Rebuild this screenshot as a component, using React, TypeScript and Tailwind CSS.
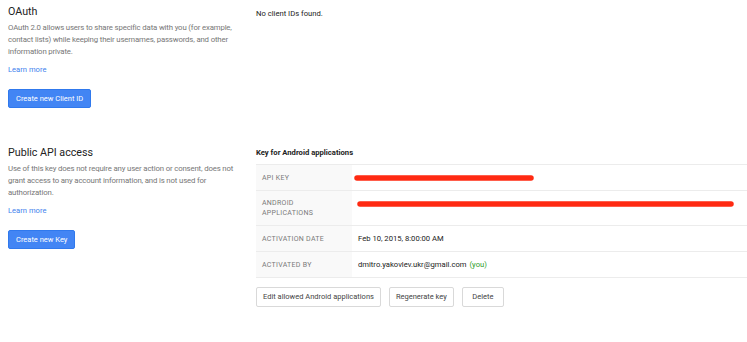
import React from "react";

const font = { fontFamily: "Roboto, 'Liberation Sans', sans-serif" };

function Redact({ width }: { width: number }) {
  return (
    <svg width={width} height={8} className="block" viewBox={`0 0 ${width} 8`}>
      <line x1={3} y1={4} x2={width - 3} y2={4} stroke="#ff2a12" strokeWidth={5.5} strokeLinecap="round" />
    </svg>
  );
}

function Row({ label, children, tall }: { label: React.ReactNode; children: React.ReactNode; tall?: boolean }) {
  return (
    <div className={`flex border-t border-[#ececec] ${tall ? "h-[35px]" : "h-[26px]"}`}>
      <div className="w-[96px] shrink-0 bg-[#f9f9f9] pl-[6px] flex items-center text-[7px] leading-[10px] tracking-[0.04em] text-[#7a7a7a] uppercase">
        {label}
      </div>
      <div className="flex-1 pl-[6px] flex items-center text-[7.65px] text-[#222]">{children}</div>
    </div>
  );
}

export default function App() {
  return (
    <div className="w-[747px] h-[342px] bg-white overflow-hidden" style={font}>
      {/* OAuth */}
      <div className="flex pt-[4px]">
        <div className="w-[256px] shrink-0 pl-2 pr-[10px]">
          <h2 className="text-[10.7px] leading-[15px] text-[#222]">OAuth</h2>
          <p className="mt-[3px] text-[7.8px] tracking-[-0.02em] leading-[12px] text-[#777]">
            OAuth 2.0 allows users to share specific data with you (for example, contact lists) while keeping their
            usernames, passwords, and other information private.
          </p>
          <a className="block mt-[6px] text-[7.6px] leading-[12px] text-[#427fed]">Learn more</a>
          <button className="mt-[13px] h-[19px] px-[7px] rounded-[2px] bg-[#4285f4] border border-[#3079ed] text-white text-[7.5px]">
            Create new Client ID
          </button>
        </div>
        <div className="flex-1 pt-[4px]">
          <p className="text-[7.65px] leading-[12px] text-[#222]">No client IDs found.</p>
        </div>
      </div>

      {/* Public API access */}
      <div className="flex mt-[37px]">
        <div className="w-[256px] shrink-0 pl-2 pr-[10px]">
          <h2 className="text-[10.7px] leading-[15px] text-[#222]">Public API access</h2>
          <p className="mt-[3px] text-[7.8px] tracking-[-0.02em] leading-[12px] text-[#777]">
            Use of this key does not require any user action or consent, does not grant access to any account
            information, and is not used for authorization.
          </p>
          <a className="block mt-[6px] text-[7.6px] leading-[12px] text-[#427fed]">Learn more</a>
          <button className="mt-[13px] h-[19px] px-[7px] rounded-[2px] bg-[#4285f4] border border-[#3079ed] text-white text-[7.5px]">
            Create new Key
          </button>
        </div>
        <div className="flex-1 min-w-[500px]">
          <p className="pt-[2px] text-[7.65px] leading-[12px] font-bold text-[#222]">Key for Android applications</p>
          <div className="mt-[5px] border-b border-[#ececec]">
            <Row label="API key">
              <div className="-ml-[4px]">
                <Redact width={180} />
              </div>
            </Row>
            <Row
              tall
              label={
                <span>
                  Android
                  <br />
                  applications
                </span>
              }
            >
              <div className="-ml-[1px] -mt-[8px]">
                <Redact width={377} />
              </div>
            </Row>
            <Row label="Activation date">Feb 10, 2015, 8:00:00 AM</Row>
            <Row label="Activated by">
              dmitro.yakovlev.ukr@gmail.com<span className="ml-[3px] text-[#2d9d2a]">(you)</span>
            </Row>
          </div>
          <div className="flex gap-[8px] mt-[9px]">
            <button className="h-[20px] px-[6px] bg-white border border-[#d9d9d9] rounded-[2px] text-[7.5px] text-[#444]">
              Edit allowed Android applications
            </button>
            <button className="h-[20px] px-[6px] bg-white border border-[#d9d9d9] rounded-[2px] text-[7.5px] text-[#444]">
              Regenerate key
            </button>
            <button className="h-[20px] w-[42px] bg-white border border-[#d9d9d9] rounded-[2px] text-[7.5px] text-[#444]">
              Delete
            </button>
          </div>
        </div>
      </div>
    </div>
  );
}
